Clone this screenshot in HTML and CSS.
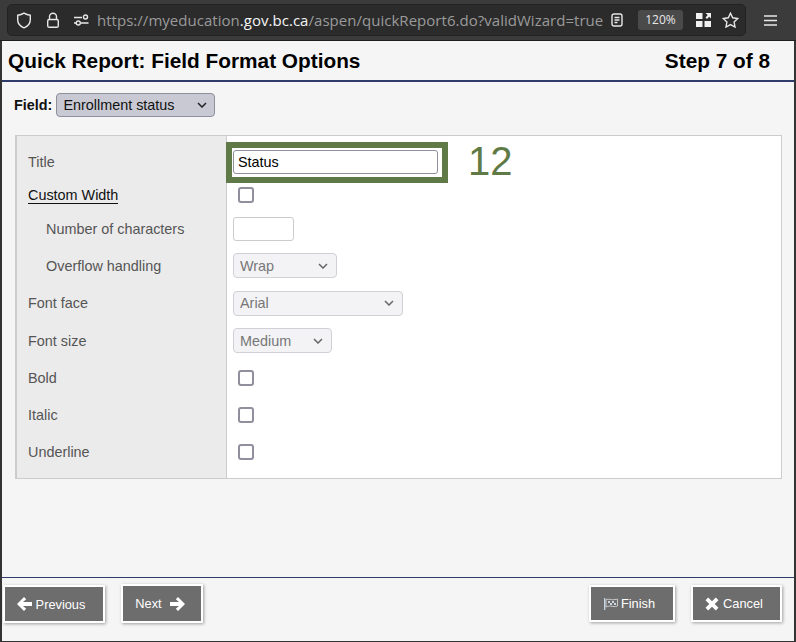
FILE: index.html
```html
<!DOCTYPE html>
<html>
<head>
    <title>Quick Report: Field Format Options</title>
    <meta charset="utf-8">
    <link rel="stylesheet" href="styles.css">
</head>
<body>
    <div class="toolbar">
        <div class="urlbar">
            <svg class="icon icon-shield" width="16" height="17" viewBox="0 0 16 17"><path d="M8 1.200c2 1.300 4 1.900 6.300 2.100v4.400c0 3.700-2.500 6.500-6.300 8.100C4.200 14.200 1.700 11.400 1.700 7.700V3.300C4 3.100 6 2.500 8 1.200z"/></svg>
            <svg class="icon icon-lock" width="14" height="17" viewBox="0 0 14 17"><path d="M3.500 7.500V4.800a3.500 3.500 0 0 1 7 0v2.700"/><rect x="1.700" y="7.500" width="10.600" height="7.800" rx="1.600"/></svg>
            <svg class="icon icon-tune" width="16" height="12" viewBox="0 0 16 12"><path d="M1 3.500h8M1 9h2M8 9h7.500"/><circle cx="12.500" cy="3" r="2"/><circle cx="5.300" cy="9" r="2"/></svg>
            <div class="url">https://myeducation<b>.gov.bc.ca</b>/aspen/quickReport6.do?validWizard=true</div>
            <svg class="icon icon-reader" width="12" height="14" viewBox="0 0 12 14"><rect x="1" y="1" width="10" height="12" rx="2"/><path d="M3.500 4.500h5M3.500 7h5M3.500 9.500h3"/></svg>
            <div class="zoom-badge">120%</div>
            <svg class="icon-solid" width="15" height="14" viewBox="0 0 15 14"><path d="M0 0h6.500v6H0zM0 8h6.500v6H0zM8.500 8H15v6H8.500zM9.500 0H15v5.500l-1.800-1.800L11 6 9.500 4.500l2.200-2.400z"/></svg>
            <svg class="icon icon-star" width="17" height="16" viewBox="0 0 17 16"><path d="M8.500 1.200l2.200 4.600 5 .7-3.600 3.500.9 5-4.500-2.400L4 15l.9-5L1.300 6.500l5-.7z"/></svg>
        </div>
        <svg class="icon icon-menu" width="13" height="11" viewBox="0 0 13 11"><path d="M0 1h13M0 5.500h13M0 10h13"/></svg>
    </div>

    <div class="page">
        <div class="page-header">
            <h1>Quick Report: Field Format Options</h1>
            <div class="step">Step 7 of 8</div>
        </div>

        <div class="field-row">
            <label for="field">Field:</label>
            <select id="field" class="field-select">
                <option>Enrollment status</option>
            </select>
        </div>

        <div class="options">
            <table class="options-table">
                <tr class="row-first">
                    <td class="name">Title</td>
                    <td class="value"><input type="text" class="title-input" value="Status"></td>
                </tr>
                <tr class="row-33">
                    <td class="name"><span class="link">Custom Width</span></td>
                    <td class="value"><input type="checkbox" class="check"></td>
                </tr>
                <tr class="row-36">
                    <td class="name sub">Number of characters</td>
                    <td class="value"><input type="text" class="num-input" disabled></td>
                </tr>
                <tr class="row-37">
                    <td class="name sub">Overflow handling</td>
                    <td class="value"><select class="off-select sel-wrap" disabled><option>Wrap</option></select></td>
                </tr>
                <tr class="row-38">
                    <td class="name">Font face</td>
                    <td class="value"><select class="off-select sel-face" disabled><option>Arial</option></select></td>
                </tr>
                <tr class="row-37">
                    <td class="name">Font size</td>
                    <td class="value"><select class="off-select sel-size" disabled><option>Medium</option></select></td>
                </tr>
                <tr class="row-37">
                    <td class="name">Bold</td>
                    <td class="value"><input type="checkbox" class="check"></td>
                </tr>
                <tr class="row-37">
                    <td class="name">Italic</td>
                    <td class="value"><input type="checkbox" class="check"></td>
                </tr>
                <tr class="row-last">
                    <td class="name">Underline</td>
                    <td class="value"><input type="checkbox" class="check"></td>
                </tr>
            </table>
            <!-- annotation drawn over the form -->
            <div class="callout-box"></div>
            <div class="callout-num">12</div>
        </div>

        <div class="footer">
            <div class="footer-side">
                <button class="btn btn-prev">
                    <svg width="15" height="14" viewBox="0 0 15 14"><path d="M7 0l2.200 2.200L6 5h9v4H6l3.200 2.800L7 14 0 7z"/></svg>
                    Previous
                </button>
                <button class="btn btn-next">
                    Next
                    <svg width="15" height="14" viewBox="0 0 15 14"><path d="M8 0L5.800 2.200 9 5H0v4h9l-3.200 2.800L8 14l7-7z"/></svg>
                </button>
            </div>
            <div class="footer-side">
                <button class="btn btn-finish">
                    <svg width="14" height="12" viewBox="0 0 14 12"><path class="pole" d="M.7 0v12"/><path class="cloth" d="M2 1.500c3-1.200 5 1 9 0 1 0 2-.3 2.500-.5v7c-3 1.500-6-.5-9 .2-1 .2-2 .4-2.500.8z"/><path d="M4 3h2v2H4zM8 3h2v2H8zM6 5h2v2H6zM10 5h2v2h-2z"/></svg>
                    Finish
                </button>
                <button class="btn btn-cancel">
                    <svg width="14" height="14" viewBox="0 0 13 13"><path d="M3 .5l3.500 3.500L10 .5 12.500 3 9 6.500l3.500 3.500-2.500 2.500L6.500 9 3 12.500 .5 10 4 6.500 .5 3z"/></svg>
                    Cancel
                </button>
            </div>
        </div>
    </div>
</body>
</html>
```

FILE: styles.css
```css
html, body {
    margin: 0;
    padding: 0;
    height: 642px;
    overflow: hidden;
}
body {
    display: flex;
    flex-direction: column;
    background: #fff;
    font-family: "Liberation Sans", Arial, sans-serif;
}

/* browser toolbar */
.toolbar {
    height: 40px;
    flex: none;
    display: flex;
    align-items: center;
    background: #3b3b3b;
    border-bottom: 1px solid #1e1e1e;
    box-sizing: content-box;
}
.urlbar {
    width: 739px;
    height: 32px;
    margin-left: 7px;
    box-sizing: border-box;
    display: flex;
    align-items: center;
    background: #2b2b2b;
    border: 1px solid #222;
    border-radius: 5px;
}
.icon {
    fill: none;
    stroke: #e8e8e8;
    stroke-width: 1.4;
    flex: none;
}
.icon-solid {
    fill: #f0f0f0;
    flex: none;
    margin-left: 13px;
}
.icon-shield {
    margin-left: 8px;
}
.icon-lock {
    margin-left: 14px;
}
.icon-tune {
    margin-left: 13px;
}
.url {
    margin-left: 8px;
    width: 514px;
    flex: none;
    font-family: "Open Sans", "Noto Sans", sans-serif;
    font-size: 15px;
    letter-spacing: 0.03px;
    color: #9a9a9a;
    white-space: nowrap;
}
.url b {
    font-weight: normal;
    color: #f4f4f4;
}
.zoom-badge {
    width: 45px;
    height: 20px;
    margin-left: 15px;
    background: #4a4a4a;
    border-radius: 3px;
    color: #e8e8e8;
    font-family: "Open Sans", "Noto Sans", sans-serif;
    font-size: 12px;
    line-height: 20px;
    text-align: center;
}
.icon-star {
    margin-left: 11px;
}
.icon-menu {
    margin-left: 18px;
}

/* page */
.page {
    flex: 1;
    display: flex;
    flex-direction: column;
    background: #f5f5f5;
    border-left: 2px solid #333;
    border-right: 2px solid #333;
    border-bottom: 1px solid #333;
}
.page-header {
    height: 39px;
    display: flex;
    justify-content: space-between;
    align-items: center;
    border-bottom: 2px solid #2f3b6b;
    padding: 0 24px 0 6px;
    color: #000;
}
h1 {
    margin: 0;
    font-size: 20.8px;
    font-weight: bold;
}
.step {
    font-size: 20.8px;
    font-weight: bold;
}
.field-row {
    height: 24px;
    margin-top: 11px;
    padding-left: 12px;
    display: flex;
    align-items: center;
    gap: 4px;
    font-size: 14.4px;
}
.field-row label {
    font-weight: bold;
    color: #111;
}
select {
    appearance: none;
    -webkit-appearance: none;
    font-family: "Liberation Sans", Arial, sans-serif;
    font-size: 14.4px;
    background-repeat: no-repeat;
    background-image: url("data:image/svg+xml,%3Csvg xmlns='http://www.w3.org/2000/svg' width='10' height='6'%3E%3Cpath d='M1 1l4 4 4-4' fill='none' stroke='%23222' stroke-width='1.500'/%3E%3C/svg%3E");
}
.field-select {
    width: 159px;
    height: 24px;
    padding: 0 0 0 6px;
    background-color: #c9c9d3;
    background-position: right 7px center;
    border: 1px solid #8f8f9d;
    border-radius: 4px;
    color: #111;
}

/* options table */
.options {
    position: relative;
    margin: 18px 12px 0 13px;
}
.options-table {
    width: 100%;
    border-collapse: separate;
    border-spacing: 0;
    border: 1px solid #ccc;
    border-left-width: 2px;
    font-size: 14.4px;
}
.options-table td {
    padding: 0;
    box-sizing: border-box;
}
.name {
    width: 210px;
    padding-left: 11px !important;
    background: #ebebeb;
    border-right: 1px solid #ccc;
    color: #555;
}
.name.sub {
    padding-left: 29px !important;
}
.value {
    background: #fff;
    padding-left: 6px !important;
}
.link {
    color: #111;
    border-bottom: 1px solid #111;
}
.row-first td {
    height: 42px;
    padding-top: 9px;
}
.row-33 td {
    height: 33px;
}
.row-36 td {
    height: 36px;
}
.row-37 td {
    height: 37px;
}
.row-38 td {
    height: 38px;
}
.row-last td {
    height: 45px;
    padding-bottom: 8px;
}
.title-input {
    display: block;
    width: 205px;
    height: 24px;
    box-sizing: border-box;
    padding: 0 4px;
    border: 1px solid #8f8f9d;
    border-radius: 3px;
    font-family: "Liberation Sans", Arial, sans-serif;
    font-size: 14.4px;
    color: #000;
}
.num-input {
    display: block;
    width: 61px;
    height: 24px;
    box-sizing: border-box;
    background: #fff;
    border: 1px solid #ccc;
    border-radius: 3px;
}
.check {
    appearance: none;
    -webkit-appearance: none;
    display: block;
    width: 16px;
    height: 16px;
    margin: 0 0 0 5px;
    box-sizing: border-box;
    background: #fff;
    border: 2px solid #8f8f9d;
    border-radius: 3px;
}
.off-select {
    display: block;
    height: 25px;
    padding: 0 0 0 6px;
    background-color: #f3f3f6;
    background-position: right 8px center;
    background-image: url("data:image/svg+xml,%3Csvg xmlns='http://www.w3.org/2000/svg' width='10' height='6'%3E%3Cpath d='M1 1l4 4 4-4' fill='none' stroke='%23666' stroke-width='1.500'/%3E%3C/svg%3E");
    border: 1px solid #d0d0d6;
    border-radius: 4px;
    color: #777;
    opacity: 1;
}
.sel-wrap {
    width: 104px;
}
.sel-face {
    width: 170px;
}
.sel-size {
    width: 99px;
}

/* green annotation */
.callout-box {
    position: absolute;
    left: 211px;
    top: 7px;
    width: 222px;
    height: 41px;
    box-sizing: border-box;
    border: 6px solid #5f7a46;
}
.callout-num {
    position: absolute;
    left: 453px;
    top: 1px;
    font-family: "Liberation Sans", Arial, sans-serif;
    font-size: 40px;
    line-height: 50px;
    color: #5f7a46;
}

/* footer buttons */
.footer {
    margin-top: auto;
    height: 64px;
    box-sizing: border-box;
    border-top: 1px solid #2f3b6b;
    display: flex;
    justify-content: space-between;
    padding: 7px 12px 0 1px;
}
.footer-side {
    display: flex;
    gap: 16px;
}
.btn {
    height: 38px;
    display: flex;
    align-items: center;
    justify-content: center;
    gap: 4px;
    padding: 0;
    background: #6d6d6d;
    border: 2px solid #fff;
    box-shadow: 1px 1px 3px rgba(0, 0, 0, 0.35);
    color: #fff;
    font-family: "Liberation Sans", Arial, sans-serif;
    font-size: 12.8px;
}
.btn svg {
    fill: #fff;
    flex: none;
}
.btn-prev {
    width: 102px;
    padding-right: 6px;
}
.btn-next {
    width: 82px;
    height: 39px;
    margin-top: -1px;
    gap: 8px;
    padding-right: 4px;
}
.btn-finish {
    width: 86px;
    height: 37px;
    gap: 3px;
    padding-right: 5px;
}
.btn-cancel {
    width: 91px;
    height: 37px;
    gap: 4px;
    padding-right: 5px;
}
.btn-finish svg {
    fill: #cdd6e4;
}
.btn-finish .pole {
    fill: none;
    stroke: #cfe0f5;
    stroke-width: 1.200;
}
.btn-finish .cloth {
    fill: #6d6d6d;
    stroke: #e0e0e0;
    stroke-width: 0.800;
}
```
